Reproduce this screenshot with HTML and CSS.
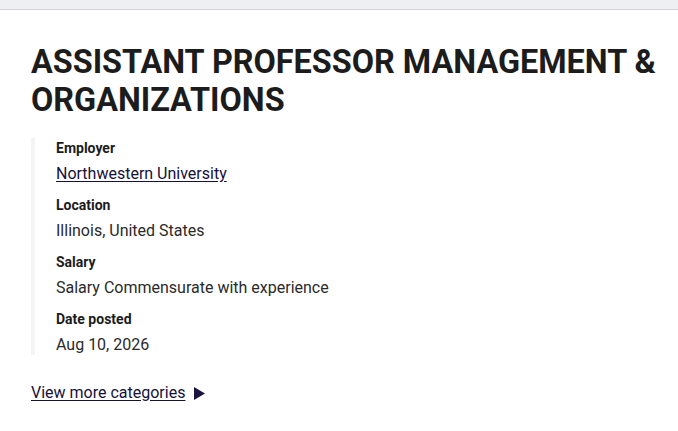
FILE: index.html
```html
<!DOCTYPE html>
<html lang="en">
<head>
<meta charset="utf-8">
<title>Assistant Professor Management &amp; Organizations</title>
<link rel="stylesheet" href="styles.css">
</head>
<body>
<div class="topbar"></div>
<main class="job">
  <h1 class="job-title">ASSISTANT PROFESSOR MANAGEMENT &amp; ORGANIZATIONS</h1>
  <dl class="details">
    <div class="item">
      <dt>Employer</dt>
      <dd><a href="#" class="link">Northwestern University</a></dd>
    </div>
    <div class="item">
      <dt>Location</dt>
      <dd>Illinois, United States</dd>
    </div>
    <div class="item">
      <dt>Salary</dt>
      <dd>Salary Commensurate with experience</dd>
    </div>
    <div class="item">
      <dt>Date posted</dt>
      <dd>Aug 10, 2026</dd>
    </div>
  </dl>
  <a href="#" class="more"><span class="more-text">View more categories</span><svg class="tri" width="11" height="13" viewBox="0 0 11 13"><path d="M0 0 L11 6.5 L0 13 Z" fill="#1b1342"/></svg></a>
</main>
</body>
</html>
```
FILE: styles.css
```css
* { box-sizing: border-box; }
html, body { margin: 0; padding: 0; background: #fff; }
body { font-family: Roboto, "Noto Sans", sans-serif; color: #222; }
.topbar { height: 10px; background: #eeeff3; border-bottom: 1px solid #d4d4d6; }
.job { padding: 33px 20px 0 31px; }
.job-title {
  margin: 0;
  font-size: 32.4px;
  line-height: 38px;
  font-weight: 700;
  color: #1c1c1c;
  letter-spacing: 0;
}
.details {
  margin: 19px 0 0 0;
  padding: 0 0 0 21px;
  border-left: 4px solid #f4f4f5;
  display: flex;
  flex-direction: column;
  gap: 11px;
}
.item dt { font-size: 14px; line-height: 20px; font-weight: 700; color: #1c1c1c; }
.item dd { margin: 6px 0 0 0; font-size: 16px; line-height: 20px; color: #2a2a2a; }
.link { color: #16103a; text-decoration: underline; text-underline-offset: 2px; }
.more {
  display: inline-flex;
  align-items: center;
  gap: 9px;
  margin-top: 26px;
  color: #16103a;
  text-decoration: none;
  font-size: 16px;
  line-height: 24px;
}
.more-text { text-decoration: underline; text-underline-offset: 2px; }
.tri { display: block; }
```
